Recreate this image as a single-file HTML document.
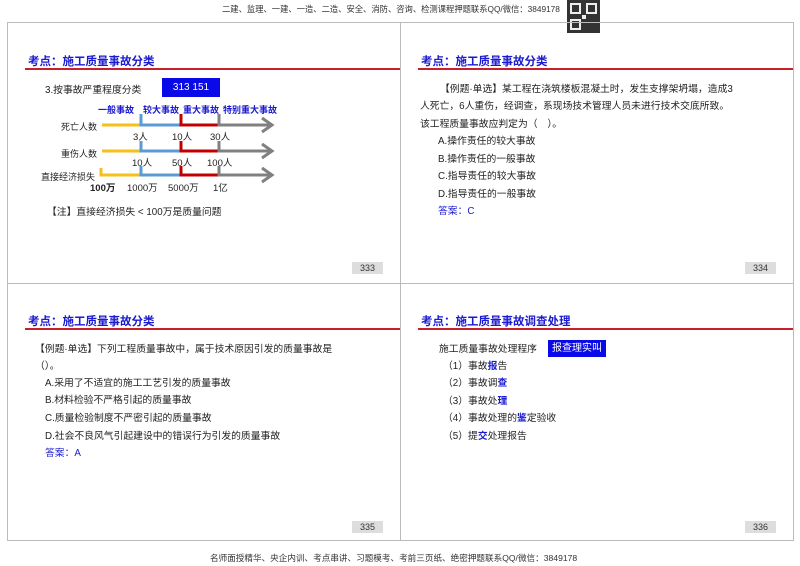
<!DOCTYPE html><html><head><meta charset="utf-8"><style>
body{margin:0;width:800px;height:566px;background:#fff;position:relative;overflow:hidden;font-family:"Liberation Sans","Noto Sans CJK SC",sans-serif;color:#222}
.a{position:absolute;white-space:nowrap}
.sl{position:absolute;border:1px solid #bbb;box-sizing:border-box}
.t{position:absolute;font-size:11.5px;font-weight:bold;color:#1a1ad0}
.rl{position:absolute;height:2px;background:#c8202a}
.pn{position:absolute;width:31px;height:12px;background:#ddd;font-size:9px;text-align:center;line-height:12px;color:#333}
.f{font-size:9.8px}
.b{color:#1a1ad0}
.bx{position:absolute;background:#0a0ae8;color:#fff;font-size:10px;text-align:center}
</style></head><body>
<div class="a" style="left:222px;top:3px;font-size:8.3px;color:#333">二建、监理、一建、一造、二造、安全、消防、咨询、检测课程押题联系QQ/微信：3849178</div>
<div class="a" style="left:567px;top:0;width:33px;height:33px;background:#333"><div style="position:absolute;left:3px;top:3px;width:7px;height:7px;border:2px solid #eee"></div><div style="position:absolute;right:3px;top:3px;width:7px;height:7px;border:2px solid #eee"></div><div style="position:absolute;left:3px;bottom:3px;width:7px;height:7px;border:2px solid #eee"></div><div style="position:absolute;left:15px;top:15px;width:4px;height:4px;background:#eee"></div></div>
<div class="sl" style="left:7px;top:22px;width:394px;height:262px"></div>
<div class="sl" style="left:400px;top:22px;width:394px;height:262px"></div>
<div class="sl" style="left:7px;top:283px;width:394px;height:258px"></div>
<div class="sl" style="left:400px;top:283px;width:394px;height:258px"></div>

<!-- slide 1 -->
<div class="t" style="left:28px;top:53px">考点：施工质量事故分类</div>
<div class="rl" style="left:25px;top:68px;width:375px"></div>
<div class="a f" style="left:45px;top:82px">3.按事故严重程度分类</div>
<div class="bx" style="left:162px;top:78px;width:58px;height:19px;line-height:19px">313 151</div>
<div class="a b" style="left:98px;top:103px;font-size:9px;font-weight:bold">一般事故</div>
<div class="a b" style="left:143px;top:103px;font-size:9px;font-weight:bold">较大事故</div>
<div class="a b" style="left:183px;top:103px;font-size:9px;font-weight:bold">重大事故</div>
<div class="a b" style="left:223px;top:103px;font-size:9px;font-weight:bold">特别重大事故</div>
<svg class="a" style="left:0;top:0" width="400" height="200">
<g stroke-width="3" fill="none">
<path d="M102 125H141" stroke="#f5c018"/><path d="M141 114V125H181" stroke="#5b9bd5"/><path d="M181 114V125H219" stroke="#c00000"/><path d="M219 114V125H272M262 118L272 125L262 132" stroke="#808080"/>
<path d="M102 151H141" stroke="#f5c018"/><path d="M141 141V151H181" stroke="#5b9bd5"/><path d="M181 141V151H219" stroke="#c00000"/><path d="M219 141V151H272M262 144L272 151L262 158" stroke="#808080"/>
<path d="M101 168V175H141" stroke="#f5c018"/><path d="M141 166V175H181" stroke="#5b9bd5"/><path d="M181 166V175H219" stroke="#c00000"/><path d="M219 166V175H272M262 168L272 175L262 182" stroke="#808080"/>
</g></svg>
<div class="a" style="left:61px;top:120px;font-size:9px">死亡人数</div>
<div class="a" style="left:61px;top:147px;font-size:9px">重伤人数</div>
<div class="a" style="left:41px;top:170px;font-size:9px">直接经济损失</div>
<div class="a" style="left:133px;top:129px;font-size:9.5px">3人</div>
<div class="a" style="left:172px;top:129px;font-size:9.5px">10人</div>
<div class="a" style="left:210px;top:129px;font-size:9.5px">30人</div>
<div class="a" style="left:132px;top:155px;font-size:9.5px">10人</div>
<div class="a" style="left:172px;top:155px;font-size:9.5px">50人</div>
<div class="a" style="left:207px;top:155px;font-size:9.5px">100人</div>
<div class="a" style="left:90px;top:180px;font-size:9.5px;font-weight:bold">100万</div>
<div class="a" style="left:127px;top:180px;font-size:9.5px">1000万</div>
<div class="a" style="left:168px;top:180px;font-size:9.5px">5000万</div>
<div class="a" style="left:213px;top:180px;font-size:9.5px">1亿</div>
<div class="a f" style="left:47px;top:204px">【注】直接经济损失 &lt; 100万是质量问题</div>
<div class="pn" style="left:352px;top:262px">333</div>

<!-- slide 2 -->
<div class="t" style="left:421px;top:53px">考点：施工质量事故分类</div>
<div class="rl" style="left:418px;top:68px;width:375px"></div>
<div class="a f" style="left:440px;top:81px">【例题·单选】某工程在浇筑楼板混凝土时，发生支撑架坍塌，造成3</div>
<div class="a f" style="left:420px;top:98px">人死亡，6人重伤，经调查，系现场技术管理人员未进行技术交底所致。</div>
<div class="a f" style="left:420px;top:116px">该工程质量事故应判定为（　）。</div>
<div class="a f" style="left:438px;top:133px">A.操作责任的较大事故</div>
<div class="a f" style="left:438px;top:151px">B.操作责任的一般事故</div>
<div class="a f" style="left:438px;top:168px">C.指导责任的较大事故</div>
<div class="a f" style="left:438px;top:186px">D.指导责任的一般事故</div>
<div class="a f b" style="left:438px;top:203px">答案：C</div>
<div class="pn" style="left:745px;top:262px">334</div>

<!-- slide 3 -->
<div class="t" style="left:28px;top:313px">考点：施工质量事故分类</div>
<div class="rl" style="left:25px;top:328px;width:375px"></div>
<div class="a f" style="left:35px;top:341px">【例题·单选】下列工程质量事故中，属于技术原因引发的质量事故是</div>
<div class="a f" style="left:35px;top:358px">（）。</div>
<div class="a f" style="left:45px;top:375px">A.采用了不适宜的施工工艺引发的质量事故</div>
<div class="a f" style="left:45px;top:392px">B.材料检验不严格引起的质量事故</div>
<div class="a f" style="left:45px;top:410px">C.质量检验制度不严密引起的质量事故</div>
<div class="a f" style="left:45px;top:428px">D.社会不良风气引起建设中的错误行为引发的质量事故</div>
<div class="a f b" style="left:45px;top:445px">答案：A</div>
<div class="pn" style="left:352px;top:521px">335</div>

<!-- slide 4 -->
<div class="t" style="left:421px;top:313px">考点：施工质量事故调查处理</div>
<div class="rl" style="left:418px;top:328px;width:375px"></div>
<div class="a f" style="left:439px;top:341px">施工质量事故处理程序</div>
<div class="bx" style="left:548px;top:340px;width:58px;height:17px;line-height:17px">报查理实叫</div>
<div class="a f" style="left:443px;top:358px">（1）事故<b class="b">报</b>告</div>
<div class="a f" style="left:443px;top:375px">（2）事故调<b class="b">查</b></div>
<div class="a f" style="left:443px;top:393px">（3）事故处<b class="b">理</b></div>
<div class="a f" style="left:443px;top:410px">（4）事故处理的<b class="b">鉴</b>定验收</div>
<div class="a f" style="left:443px;top:428px">（5）提<b class="b">交</b>处理报告</div>
<div class="pn" style="left:745px;top:521px">336</div>

<div class="a" style="left:210px;top:552px;font-size:8.6px;color:#333">名师面授精华、央企内训、考点串讲、习题模考、考前三页纸、绝密押题联系QQ/微信：3849178</div>
</body></html>
